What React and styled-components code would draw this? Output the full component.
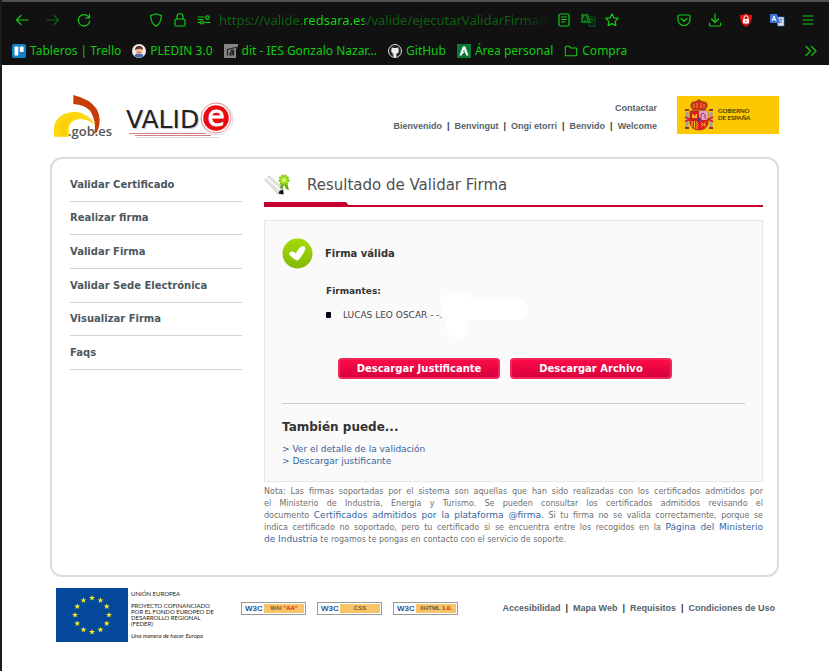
import React from "react";
import styled, { createGlobalStyle } from "styled-components";

const GREEN = "#10cc10";
const DIM = "#0c6410";
const RED = "#c80032";

const GlobalStyle = createGlobalStyle`
  * { box-sizing: border-box; }
  body { margin: 0; background: #fff; }
  button, input { font: inherit; padding: 0; border: 0; background: none; }
  svg { display: block; flex: none; }
`;

const Window = styled.div`
  min-height: 100vh;
  border-left: 2px solid #1c1c1c;
  background: #fff;
  font-family: "DejaVu Sans", sans-serif;
`;

/* Browser chrome */
const Chrome = styled.header`
  background: #111;
  border-top: 2px solid #505050;
  color: ${GREEN};
  font-family: "Noto Sans", sans-serif;
  font-size: 12px;
`;
const Toolbar = styled.div`
  display: flex;
  align-items: center;
  height: 36px;
  padding: 0 13px 0 12px;
`;
const IconGroup = styled.div`
  display: flex;
  align-items: center;
  gap: ${(p) => p.$gap}px;
`;
const AddressBar = styled.div`
  display: flex;
  flex: 1;
  align-items: center;
  gap: 6px;
  min-width: 0;
  margin: 0 56px;
`;
const Address = styled.input`
  flex: 1;
  min-width: 0;
  height: 24px;
  padding-left: 1px;
  font-size: 13px;
  outline: none;
  color: transparent;
  background: linear-gradient(90deg, ${DIM} 84px, #10e010 84px, #10e010 146px, ${DIM} 146px, ${DIM} 92%, #111 100%);
  -webkit-background-clip: text;
  background-clip: text;
`;
const IconButton = styled.button`
  width: 16px;
  height: 16px;
  color: ${(p) => (p.$dim ? DIM : GREEN)};
`;
const Bookmarks = styled.nav`
  display: flex;
  align-items: center;
  gap: 11px;
  height: 27px;
  padding: 0 10px 2px;
`;
const Bookmark = styled.a`
  display: flex;
  align-items: center;
  gap: 4px;
  color: ${GREEN};
  text-decoration: none;
  white-space: nowrap;
`;
const Overflow = styled(IconButton)`
  margin-left: auto;
`;

/* Site */
const Site = styled.div`
  padding: 0 50px 0 48px;
`;
const SiteHeader = styled.div`
  display: flex;
  align-items: center;
  height: 92px;
  padding: 8px 0 0 2px;
`;
const Logos = styled.div`
  display: flex;
  align-items: center;
  gap: 11px;
  margin-right: auto;
  padding-top: 4px;
`;
const HeaderLinks = styled.div`
  display: flex;
  flex-direction: column;
  align-items: flex-end;
  gap: 6px;
  margin-right: 20px;
  padding-top: 4px;
`;
const LinkRow = styled.nav`
  display: flex;
  gap: 5px;
  font: bold 9px/12px "Liberation Sans", sans-serif;
  color: #303840;
  white-space: nowrap;
`;
const SmallLink = styled.a`
  color: #57626b;
  text-decoration: none;
`;
const Panel = styled.div`
  display: flex;
  align-items: flex-start;
  gap: 22px;
  min-height: 420px;
  padding: 9px 14px 24px 18px;
  border: 2px solid #dcdcdc;
  border-radius: 12px;
`;
const Menu = styled.nav`
  display: grid;
  grid-auto-rows: 1fr;
  flex: 0 0 172px;
  height: 202px;
`;
const MenuLink = styled.a`
  display: flex;
  align-items: center;
  border-bottom: 1px solid #d4d4d4;
  color: #4b5760;
  font-size: 10px;
  font-weight: bold;
  text-decoration: none;
`;
const Main = styled.main`
  flex: 1;
  min-width: 0;
`;
const TitleRow = styled.div`
  display: flex;
  align-items: center;
  gap: 16px;
  height: 34px;
`;
const Title = styled.h1`
  margin: 0;
  color: #505050;
  font-size: 15px;
  font-weight: normal;
`;
const Rule = styled.div`
  height: 5px;
  margin-bottom: 13px;
  border-bottom: 2px solid ${RED};
  &::before {
    content: "";
    display: block;
    width: 86px;
    height: 5px;
    background: ${RED};
    clip-path: polygon(0 0, 82px 0, 86px 100%, 0 100%);
  }
`;
const Result = styled.section`
  padding: 16px 17px 14px;
  border: 1px solid #e6e6e6;
  background: #fafafa;
`;
const Status = styled.div`
  display: flex;
  align-items: center;
  gap: 12px;
  height: 32px;
`;
const StatusText = styled.h2`
  margin: 0;
  color: #333;
  font-size: 10px;
`;
const Signers = styled.div`
  padding: 16px 0 0 44px;
  color: #444;
  font-size: 9px;
  line-height: 12px;
`;
const SignersTitle = styled.h3`
  margin: 0 0 12px;
  color: #333;
  font-size: 9px;
`;
const SignerList = styled.ul`
  margin: 0;
  padding: 0;
  list-style: none;
`;
const Signer = styled.li`
  position: relative;
  display: flex;
  align-items: center;
  gap: 12px;
  &::before {
    content: "";
    width: 5px;
    height: 6px;
    border-radius: 1px;
    background: #001;
  }
`;
const Erased = styled.svg`
  position: absolute;
  left: 112px;
  top: -17px;
`;
const Actions = styled.div`
  display: flex;
  justify-content: center;
  gap: 10px;
  margin: 37px 0 24px;
  padding-right: 17px;
`;
const ActionButton = styled.button`
  width: 162px;
  height: 21px;
  border: 2px solid #f02858;
  border-radius: 4px;
  background: linear-gradient(#fb0c48, #d8003c);
  color: #fff;
  font-size: 10px;
  font-weight: bold;
  line-height: 16px;
`;
const Divider = styled.hr`
  margin: 0 0 14px;
  border: 0;
  border-top: 1px solid #ccc;
`;
const MoreTitle = styled.h2`
  margin: 0 0 7px;
  color: #333;
  font-size: 12px;
  line-height: 18px;
`;
const Options = styled.ul`
  margin: 0;
  padding: 0;
  list-style: none;
  color: #3566a0;
  font-size: 9px;
  line-height: 12px;
`;
const TextLink = styled.a`
  color: #3566a0;
  font-size: 9px;
  line-height: 1;
  text-decoration: none;
`;
const Note = styled.p`
  margin: 4px 0 0;
  color: #6f6f6f;
  font-size: 8px;
  line-height: 12px;
`;
const NoteLine = styled.span`
  display: block;
  text-align: justify;
  text-align-last: ${(p) => (p.$last ? "left" : "justify")};
`;
const SiteFooter = styled.footer`
  display: flex;
  align-items: flex-start;
  padding: 11px 4px 20px 6px;
`;
const Funding = styled.div`
  width: 104px;
  margin: 3px 0 0 3px;
  color: #222;
  font: 6px/6px Lato, sans-serif;
  white-space: nowrap;
`;
const FundingLine = styled.p`
  margin: 0 0 6px;
  font-style: ${(p) => (p.$italic ? "italic" : "normal")};
`;
const Badges = styled.div`
  display: flex;
  gap: 11px;
  margin: 14px auto 0 6px;
`;
const Badge = styled.a`
  display: flex;
  width: 65px;
  height: 13px;
  padding: 1px;
  border: 1px solid #999;
  color: #2a5a9c;
  font: bold 8px/9px "Liberation Sans", sans-serif;
  text-decoration: none;
`;
const BadgeMark = styled.span`
  width: 21px;
  padding-left: 2px;
`;
const BadgeLabel = styled.span`
  flex: 1;
  background: #f8c468;
  color: #6b5a38;
  font-size: 6px;
  text-align: center;
`;
const Strong = styled.b`
  color: #e81010;
`;
const FooterLinks = styled(LinkRow)`
  margin-top: 14px;
`;

const Icon = ({ children, size = 16, fill = "none" }) => (
  <svg width={size} height={size} viewBox="0 0 16 16" fill={fill} stroke="currentColor" strokeWidth="1.2" strokeLinecap="round" strokeLinejoin="round" aria-hidden="true">
    {children}
  </svg>
);

const icons = {
  back: <path d="M14 8H2.5M7 3.5 2.5 8 7 12.5" />,
  forward: <path d="M2 8h11.5M9 3.5 13.5 8 9 12.5" />,
  reload: <path d="M12.8 5.2A5.7 5.7 0 1 0 13.7 9M13.5 2v4h-4" />,
  shield: <path d="M8 1.8c1.7 1 3.5 1.4 5.3 1.5 0 5-1.3 8.7-5.3 11-4-2.300-5.300-6-5.300-11C4.500 3.200 6.300 2.800 8 1.800Z" />,
  lock: <><rect x="3" y="7" width="10" height="7" rx="1.300" /><path d="M5 7V4.500a3 3 0 0 1 6 0V7" /></>,
  tune: <><path d="M2 5h6M2 7.500h5M2 10.500h2M8 10.500h6" /><circle cx="11.500" cy="5.500" r="1.700" /><circle cx="6" cy="10.500" r="1.500" /></>,
  reader: <><rect x="3" y="2" width="10" height="12" rx="1.500" /><path d="M5.500 5h5M5.500 7.500h5M5.500 10h3.500" /></>,
  star: <path d="m8 1.800 1.900 4 4.400.6-3.200 3 .8 4.300L8 11.600l-3.900 2.100.8-4.300-3.200-3 4.400-.6Z" />,
  pocket: <><path d="M3 3h10q1 0 1 1v3.500a6 6 0 0 1-12 0V4q0-1 1-1Z" /><path d="m5 6.500 3 2.800 3-2.800" /></>,
  download: <path d="M8 2v8M4.500 7 8 10.500 11.500 7M2.500 11v2q0 1 1 1h9q1 0 1-1v-2" />,
  menu: <path d="M3 4h10M3 8h10M3 12h10" />,
  more: <path d="m3 3.500 4.500 4.500L3 12.500M8.500 3.500 13 8l-4.500 4.500" />,
  folder: <path d="M1.500 3.500q0-1 1-1h3.500l1.500 2h6q1 0 1 1v7q0 1-1 1h-11q-1 0-1-1Z" />,
};

const Translate = ({ back, front, mark }) => (
  <svg width="16" height="16" viewBox="0 0 16 16" aria-hidden="true">
    <path d="M7 5h8v9H9Z" fill={front} stroke={back} strokeWidth=".7" />
    <path d="M1 2h7l3 9H1Z" fill={back} />
    <path d="m3 9 2-5 2 5M3.700 7.500h2.600" fill="none" stroke={mark} />
    <path d="M9.500 7.500h4M11.500 6.500v1M13 7.500q-1 3-3 4M10.500 9l2.500 2.500" fill="none" stroke={back} strokeWidth=".8" />
  </svg>
);

const Blocker = () => (
  <svg width="16" height="16" viewBox="0 0 16 16" aria-hidden="true">
    <path d="M8 1.500c2 1 4 1.500 6 1.500 0 5-1 9-6 12-5-3-6-7-6-12 2 0 4-.500 6-1.500Z" fill="#e01414" />
    <rect x="5" y="7" width="6" height="4.500" rx=".7" fill="#fff" />
    <path d="M6 7V5.700a2 2 0 0 1 4 0V7" fill="none" stroke="#fff" />
    <path d="M8 8.500v1.500" stroke="#e01414" />
  </svg>
);

const favicons = {
  trello: (
    <svg width="14" height="14" viewBox="0 0 14 14"><rect width="14" height="14" rx="2" fill="#1480c8" /><rect x="2.500" y="2.500" width="3.800" height="9" rx=".8" fill="#fff" /><rect x="7.800" y="2.500" width="3.800" height="5.500" rx=".8" fill="#fff" /></svg>
  ),
  pledin: (
    <svg width="14" height="14" viewBox="0 0 14 14"><circle cx="7" cy="7" r="7" fill="#eee" /><path d="M2.500 12q1-3 4.500-3t4.500 3Q7 15.500 2.500 12Z" fill="#4868b0" /><circle cx="7" cy="6.500" r="3.600" fill="#f0b894" /><path d="M3 6Q3 2 7 2t4 4Q9.500 4.500 7 4.700T3 6Z" fill="#5a3020" /><path d="M5.500 8.200q1.500 1 3 0" stroke="#b04030" fill="none" strokeWidth=".8" /></svg>
  ),
  dit: (
    <svg width="14" height="14" viewBox="0 0 14 14"><path d="M0 0H14V3L12 5V14H0Z" fill="#858585" /><path d="M3.500 11.500V5.500L14 3M6 9.500l2-3.500 1 3.500ZM5 11h4.500V6" fill="none" stroke="#222" strokeWidth="1.200" /></svg>
  ),
  github: (
    <svg width="14" height="14" viewBox="0 0 14 14"><circle cx="7" cy="7" r="6.500" fill="#222" stroke="#ddd" /><path d="M3.800 3.200 5.500 4h3l1.700-.8.400 2.200q.8 3.600-2.200 4.100V13H5.600v-1.500l-1.800-1h1.800v-1Q2.600 9 3.400 5.400Z" fill="#eee" /></svg>
  ),
  area: (
    <svg width="14" height="14" viewBox="0 0 14 14"><rect width="14" height="14" fill="#0b7836" /><path d="M5.800 2.500h2.500L11.500 11.500H9.300L7 5.500 4.700 11.500H2.500Z" fill="#fff" /><path d="M4.500 9.500 7.500 8" stroke="#fff" /></svg>
  ),
  folder: <Icon size={14}>{icons.folder}</Icon>,
};

const GobLogo = () => (
  <svg width="63" height="48" viewBox="36 24 189 144" role="img" aria-label=".gob.es">
    <path d="M100 30Q150 42 170 72Q188 104 171 142L163 146Q170 108 151 78Q134 59 100 57Z" fill="#c83c08" />
    <path d="M42 155V126Q50 82 108 80Q142 84 167 120Q132 94 106 105Q84 114 86 136V155Z" fill="#fcd80c" />
    <path d="M62 120Q76 91 118 94Q98 96 86 112Q76 126 80 155H60Z" fill="#f6c400" opacity=".4" />
    <text x="84" y="152" fontFamily="Open Sans, sans-serif" fontWeight="600" fontSize="39" fill="#555">.gob.es</text>
  </svg>
);

const ValideLogo = () => (
  <svg width="108" height="42" viewBox="0 0 108 42" role="img" aria-label="VALIDe">
    <text x="1" y="33" fontFamily="DejaVu Sans, sans-serif" fontSize="25" fill="#ccc">VALID</text>
    <text x="0" y="32" fontFamily="DejaVu Sans, sans-serif" fontSize="25" fill="#222">VALID</text>
    <circle cx="91" cy="23" r="16" fill="#fff" stroke="#ddd" />
    <circle cx="90" cy="22" r="15" fill="#fff" stroke="#d86060" strokeWidth=".7" />
    <path d="M3 37.500H80M9 39.500H85" stroke="#c86060" strokeWidth=".8" />
    <path d="M10 41.500H94" stroke="#ddd" />
    <circle cx="90" cy="22" r="12.800" fill="#e80c10" />
    <text x="90" y="30" textAnchor="middle" fontFamily="DejaVu Sans, sans-serif" fontSize="28" fill="#fff" stroke="#fff" strokeWidth=".8">e</text>
  </svg>
);

const SpainLogo = () => (
  <svg width="102" height="38" viewBox="0 0 102 38" role="img" aria-label="Gobierno de España">
    <rect width="102" height="38" fill="#fcc800" />
    <path d="M22 3v4M20 5h4" stroke="#804020" />
    <path d="M14 11Q13 6 17 6Q22 3 27 6Q31 6 30 11L28 14H16Z" fill="#d03020" stroke="#804020" strokeWidth=".7" />
    <path d="M17 8v4M20 7v5M24 7v5M27 8v4" stroke="#e8b020" strokeWidth=".8" />
    <path d="M13 15H31V27Q30 34 22 34T13 27Z" fill="#dc1c24" stroke="#983018" strokeWidth=".8" />
    <path d="M22 15h9v9h-9Z" fill="#d8a8c0" />
    <path d="M24 22v-4l2-1 2 2v4" stroke="#b03060" fill="none" />
    <path d="M15 22v-4h1.500v1.500h2V18H20v4Z" fill="#f0b818" />
    <path d="M15 25v6M17.500 25v7.500M20 25v8" stroke="#f0b818" strokeWidth="1.100" />
    <path d="M24 26l5 5M29 26l-5 5M24 28.500h5" stroke="#f0b818" strokeWidth=".8" />
    <circle cx="22" cy="24" r="2.200" fill="#3048a0" stroke="#dc1c24" />
    <path d="M10 16v15M34 16v15" stroke="#a8a0a0" strokeWidth="3" />
    <path d="M8 14h4M32 14h4M8 32h4M32 32h4" stroke="#8c3828" strokeWidth="2" />
    <path d="m8 21 5 2.500-5 2M36 21l-5 2.500 5 2" fill="none" stroke="#d82020" strokeWidth="1.600" />
    <g fontFamily="Lato, sans-serif" fontSize="6" fill="#403000" stroke="#403000" strokeWidth=".15">
      <text x="41" y="17">GOBIERNO</text>
      <text x="41" y="24">DE ESPAÑA</text>
    </g>
  </svg>
);

const TitleIcon = () => (
  <svg width="27" height="24" viewBox="0 0 27 24" aria-hidden="true">
    <path d="m1 7 4-4 14 12 .5 6-6-.500Z" fill="#e4e4e4" stroke="#bbb" strokeWidth=".7" />
    <path d="m3 5 12 11" stroke="#fff" strokeWidth="1.500" />
    <path d="m15.500 18 3.500-1.500.5 5-5-1Z" fill="#111" />
    <path d="M17 10 16 16l3-1 1-4 2 5 3 1-2-7Z" fill="#64a818" />
    <circle cx="20" cy="7" r="4.500" fill="#a8e020" stroke="#80c818" strokeWidth="2" strokeDasharray="2 1" />
    <circle cx="20" cy="7" r="2" fill="#d8f878" />
  </svg>
);

const CheckIcon = () => (
  <svg width="31" height="31" viewBox="0 0 31 31" aria-hidden="true">
    <defs>
      <linearGradient id="ok" x2="0" y2="1"><stop stopColor="#a4dc08" /><stop offset="1" stopColor="#84b808" /></linearGradient>
    </defs>
    <circle cx="15.500" cy="15.500" r="15" fill="url(#ok)" />
    <path d="M7 16Q8.500 12.500 12 14L14 15.500Q16 9.500 21 8Q24 8 23 12Q21 17 16.500 22Q15 23 13 21.500Q9 19 7 16Z" fill="#fff" />
  </svg>
);

const starPath = "M0-3 .8-.9 3-.9 1.200.5 1.900 2.600 0 1.300-1.900 2.600-1.200.5-3-.9-.8-.9Z";
const EuFlag = () => (
  <svg width="72" height="54" viewBox="0 0 72 54" role="img" aria-label="Unión Europea">
    <rect width="72" height="54" fill="#04489c" />
    {Array.from({ length: 12 }, (_, i) => {
      const a = (i * Math.PI) / 6;
      return <path key={i} d={starPath} fill="#f8ec20" transform={`translate(${36 + 17 * Math.sin(a)} ${27 - 17 * Math.cos(a)})`} />;
    })}
  </svg>
);

const Tool = ({ name, label, dim }) => (
  <IconButton type="button" aria-label={label} $dim={dim}><Icon>{icons[name]}</Icon></IconButton>
);

const Links = ({ items, as: Row = LinkRow }) => (
  <Row>
    {items.map((t, i) => (
      <React.Fragment key={t}>
        {i > 0 && <span>|</span>}
        <SmallLink href="#">{t}</SmallLink>
      </React.Fragment>
    ))}
  </Row>
);

const bookmarks = [
  ["trello", "Tableros | Trello"],
  ["pledin", "PLEDIN 3.0"],
  ["dit", "dit - IES Gonzalo Nazar..."],
  ["github", "GitHub"],
  ["area", "Área personal"],
  ["folder", "Compra"],
];
const menu = ["Validar Certificado", "Realizar firma", "Validar Firma", "Validar Sede Electrónica", "Visualizar Firma", "Faqs"];

export default function App() {
  return (
    <Window>
      <GlobalStyle />
      <Chrome>
        <Toolbar>
          <IconGroup $gap={15}>
            <Tool name="back" label="Atrás" />
            <Tool name="forward" label="Adelante" dim />
            <Tool name="reload" label="Recargar" />
          </IconGroup>
          <AddressBar>
            <IconGroup $gap={8}>
              <Tool name="shield" label="Protección" />
              <Tool name="lock" label="Conexión segura" />
              <Tool name="tune" label="Permisos" />
            </IconGroup>
            <Address aria-label="Dirección" defaultValue="https://valide.redsara.es/valide/ejecutarValidarFirma/ejecutar" />
            <IconGroup $gap={8}>
              <Tool name="reader" label="Vista de lectura" />
              <IconButton type="button" aria-label="Traducir página"><Translate back="#0c7814" front="#111" mark="#111" /></IconButton>
              <Tool name="star" label="Añadir marcador" />
            </IconGroup>
          </AddressBar>
          <IconGroup $gap={15}>
            <Tool name="pocket" label="Pocket" />
            <Tool name="download" label="Descargas" />
            <IconButton type="button" aria-label="Bloqueador"><Blocker /></IconButton>
            <IconButton type="button" aria-label="Traductor"><Translate back="#3c74dc" front="#e4e4e4" mark="#fff" /></IconButton>
            <Tool name="menu" label="Menú" />
          </IconGroup>
        </Toolbar>
        <Bookmarks>
          {bookmarks.map(([icon, text]) => (
            <Bookmark href="#" key={icon}>{favicons[icon]}{text}</Bookmark>
          ))}
          <Overflow type="button" aria-label="Más marcadores"><Icon>{icons.more}</Icon></Overflow>
        </Bookmarks>
      </Chrome>

      <Site>
        <SiteHeader>
          <Logos><GobLogo /><ValideLogo /></Logos>
          <HeaderLinks>
            <Links items={["Contactar"]} />
            <Links items={["Bienvenido", "Benvingut", "Ongi etorri", "Benvido", "Welcome"]} />
          </HeaderLinks>
          <SpainLogo />
        </SiteHeader>

        <Panel>
          <Menu>{menu.map((m) => <MenuLink href="#" key={m}>{m}</MenuLink>)}</Menu>
          <Main>
            <TitleRow><TitleIcon /><Title>Resultado de Validar Firma</Title></TitleRow>
            <Rule />
            <Result>
              <Status><CheckIcon /><StatusText>Firma válida</StatusText></Status>
              <Signers>
                <SignersTitle>Firmantes:</SignersTitle>
                <SignerList>
                  <Signer>
                    LUCAS LEO OSCAR - -.
                    <Erased width="92" height="46" viewBox="0 0 92 46" fill="#fff" aria-hidden="true">
                      <circle cx="11" cy="11" r="9" />
                      <circle cx="26" cy="9" r="8" />
                      <rect x="4" y="8" width="86" height="20" rx="10" />
                      <circle cx="19" cy="35" r="11" />
                    </Erased>
                  </Signer>
                </SignerList>
              </Signers>
              <Actions>
                <ActionButton type="button">Descargar Justificante</ActionButton>
                <ActionButton type="button">Descargar Archivo</ActionButton>
              </Actions>
              <Divider />
              <MoreTitle>También puede...</MoreTitle>
              <Options>
                <li>&gt; <TextLink href="#">Ver el detalle de la validación</TextLink></li>
                <li>&gt; <TextLink href="#">Descargar justificante</TextLink></li>
              </Options>
            </Result>
            <Note>
              <NoteLine>Nota: Las firmas soportadas por el sistema son aquellas que han sido realizadas con los certificados admitidos por </NoteLine>
              <NoteLine>el Ministerio de Industria, Energía y Turismo. Se pueden consultar los certificados admitidos revisando el </NoteLine>
              <NoteLine>documento <TextLink href="#">Certificados admitidos por la plataforma @firma.</TextLink> Si tu firma no se valida correctamente, porque se </NoteLine>
              <NoteLine>indica certificado no soportado, pero tu certificado si se encuentra entre los recogidos en la <TextLink href="#">Página del Ministerio</TextLink></NoteLine>
              <NoteLine $last><TextLink href="#">de Industria</TextLink> te rogamos te pongas en contacto con el servicio de soporte.</NoteLine>
            </Note>
          </Main>
        </Panel>

        <SiteFooter>
          <EuFlag />
          <Funding>
            <FundingLine>UNIÓN EUROPEA</FundingLine>
            <FundingLine>PROYECTO COFINANCIADO<br />POR EL FONDO EUROPEO DE<br />DESARROLLO REGIONAL<br />(FEDER)</FundingLine>
            <FundingLine $italic>Una manera de hacer Europa</FundingLine>
          </Funding>
          <Badges>
            <Badge href="#"><BadgeMark>W3C</BadgeMark><BadgeLabel>WAI <Strong>"AA"</Strong></BadgeLabel></Badge>
            <Badge href="#"><BadgeMark>W3C</BadgeMark><BadgeLabel>CSS</BadgeLabel></Badge>
            <Badge href="#"><BadgeMark>W3C</BadgeMark><BadgeLabel>XHTML <Strong>1.0.</Strong></BadgeLabel></Badge>
          </Badges>
          <Links as={FooterLinks} items={["Accesibilidad", "Mapa Web", "Requisitos", "Condiciones de Uso"]} />
        </SiteFooter>
      </Site>
    </Window>
  );
}
